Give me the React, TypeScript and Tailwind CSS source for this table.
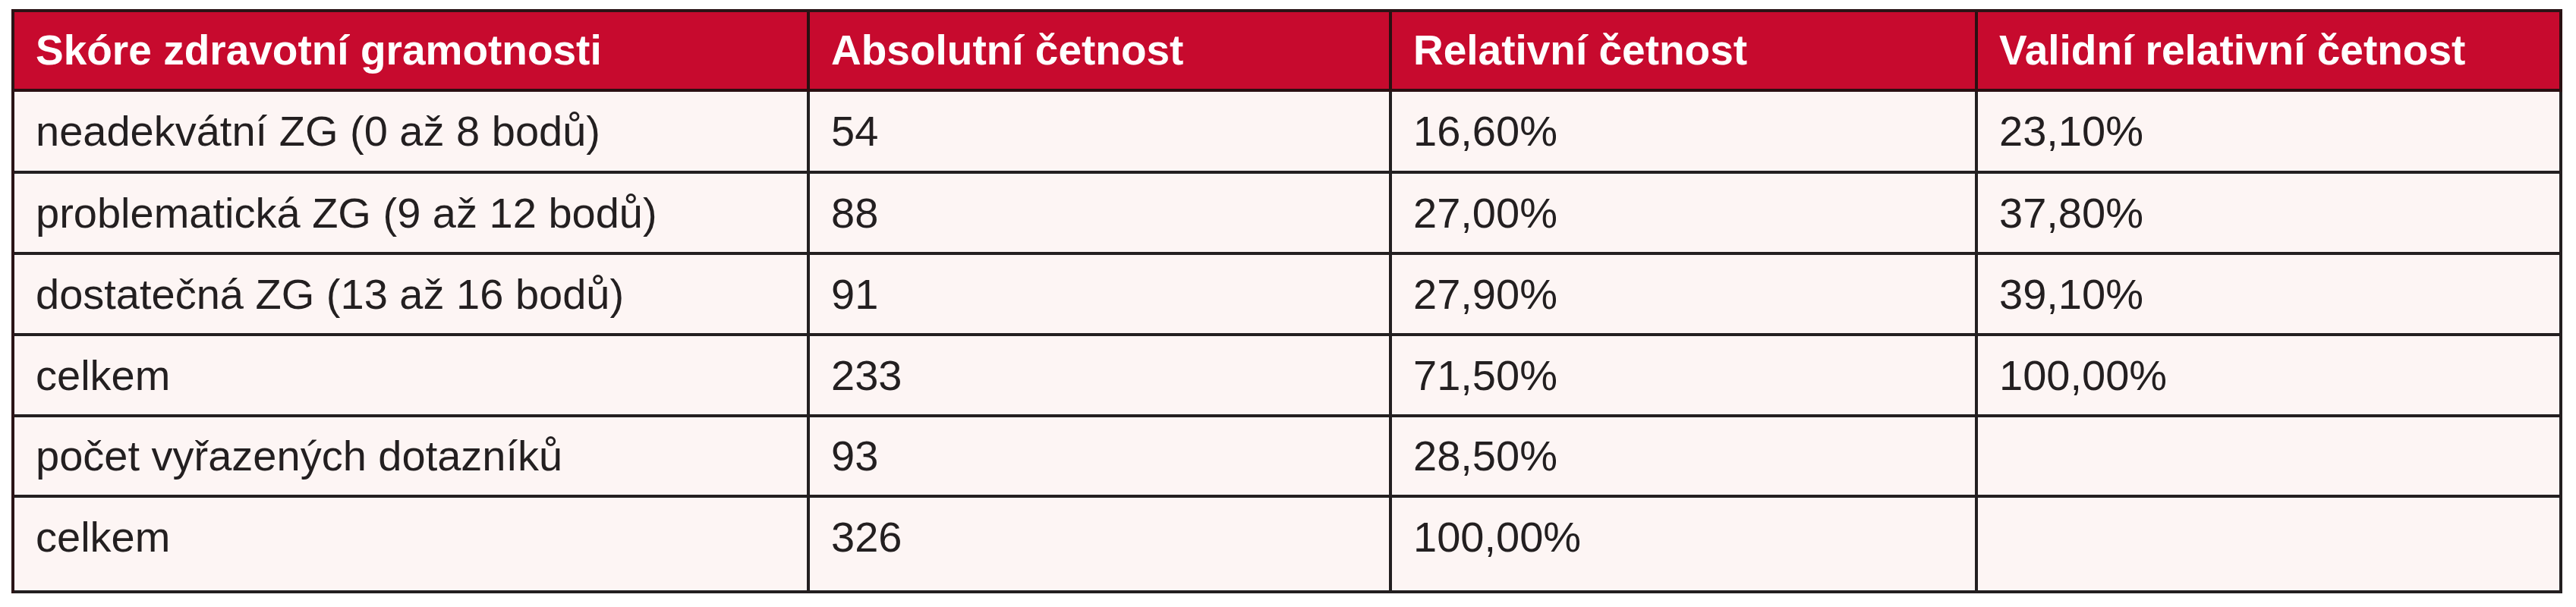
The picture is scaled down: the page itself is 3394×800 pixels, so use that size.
const headers = [
  "Skóre zdravotní gramotnosti",
  "Absolutní četnost",
  "Relativní četnost",
  "Validní relativní četnost",
];

const rows: { cells: string[]; h: string; last?: boolean }[] = [
  { cells: ["neadekvátní ZG (0 až 8 bodů)", "54", "16,60%", "23,10%"], h: "h-[108px]" },
  { cells: ["problematická ZG (9 až 12 bodů)", "88", "27,00%", "37,80%"], h: "h-[107px]" },
  { cells: ["dostatečná ZG (13 až 16 bodů)", "91", "27,90%", "39,10%"], h: "h-[107px]" },
  { cells: ["celkem", "233", "71,50%", "100,00%"], h: "h-[107px]" },
  { cells: ["počet vyřazených dotazníků", "93", "28,50%", ""], h: "h-[106px]" },
  { cells: ["celkem", "326", "100,00%", ""], h: "h-[126px]", last: true },
];

export default function App() {
  return (
    <div className="w-[3394px] h-[800px] bg-white pt-[12px] pl-[15px] font-['Liberation_Sans',Arial,sans-serif]">
      <div className="grid grid-cols-[1048px_767px_772px_770px] w-[3361px] border-l-4 border-t-4 border-[#2a1416]">
        {headers.map((h) => (
          <div
            key={h}
            className="h-[105px] flex items-center pl-[28px] border-r-4 border-b-4 border-[#2a1012] bg-[#c70a2e] text-white font-bold text-[55px] leading-none"
          >
            {h}
          </div>
        ))}
        {rows.map((r, i) =>
          r.cells.map((c, j) => (
            <div
              key={`${i}-${j}`}
              className={`${r.h} flex items-center pl-[28px] border-r-4 border-b-4 border-[#231f20] bg-[#fdf5f4] text-[#231f20] text-[56px] leading-none ${
                r.last ? "pb-[19px]" : ""
              }`}
            >
              {c}
            </div>
          ))
        )}
      </div>
    </div>
  );
}
